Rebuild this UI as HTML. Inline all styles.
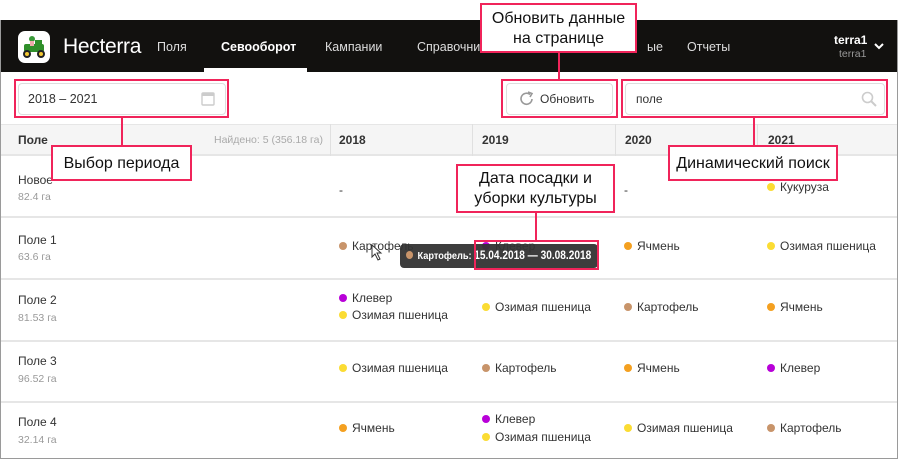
<!DOCTYPE html>
<html><head><meta charset="utf-8"><style>
*{margin:0;padding:0;box-sizing:border-box}
body{width:900px;height:460px;background:#fff;position:relative;overflow:hidden;font-family:"Liberation Sans",Arial,sans-serif;color:#333}
.a{position:absolute}
.frame{left:0;top:20px;width:898px;height:439px;border:1px solid #9a9a9a;border-top:none}
.hdr{left:1px;top:20px;width:896px;height:52px;background:#12110f}
.nav{color:#ddd;font-size:12.5px;top:40px}
.t{font-size:12px;color:#333;white-space:nowrap}
.sub{font-size:10.5px;color:#999}
.d{display:inline-block;width:8px;height:8px;border-radius:50%;margin-right:5px;vertical-align:0}
.k{background:#c8946a}.v{background:#b800d8}.o{background:#fbdc33}.y{background:#f4a020}
.line{background:#e6e6e6;height:2px;left:1px;width:896px}
.red{border:2px solid #f0245a}
.cb{background:#fff;font-size:16px;color:#111;text-align:center;line-height:20px}
.rl{background:#f0245a}
</style></head><body>
<div class="a frame"></div>
<div class="a hdr"></div>
<div class="a" style="left:18px;top:31px;width:32px;height:32px;background:#fff;border-radius:7px"></div>
<svg class="a" style="left:20px;top:34px" width="28" height="26" viewBox="0 0 28 26">
<rect x="4" y="10" width="20" height="8" rx="2" fill="#2f8f2a"/><rect x="15" y="6" width="7" height="6" fill="#2f8f2a"/>
<circle cx="12" cy="5" r="3" fill="#3a9a3a"/><rect x="10" y="7" width="4" height="5" fill="#eaa"/>
<circle cx="7" cy="20" r="4" fill="#222"/><circle cx="7" cy="20" r="2" fill="#f3c832"/>
<circle cx="21" cy="20" r="4" fill="#222"/><circle cx="21" cy="20" r="2" fill="#f3c832"/></svg>
<div class="a" style="left:63px;top:35px;color:#fff;font-size:21px;letter-spacing:-0.3px">Hecterra</div>
<div class="a nav" style="left:157px">Поля</div>
<div class="a nav" style="left:221px;color:#fff;font-weight:bold">Севооборот</div>
<div class="a" style="left:204px;top:68px;width:103px;height:4px;background:#fff"></div>
<div class="a nav" style="left:325px">Кампании</div>
<div class="a nav" style="left:417px">Справочники</div>
<div class="a nav" style="left:647px">ые</div>
<div class="a nav" style="left:687px">Отчеты</div>
<div class="a" style="left:834px;top:33px;color:#fff;font-size:12px;font-weight:bold">terra1</div>
<div class="a" style="left:839px;top:48px;color:#999;font-size:10.5px">terra1</div>
<svg class="a" style="left:874px;top:43px" width="10" height="7"><path d="M1 1 L5 5 L9 1" stroke="#fff" stroke-width="2" fill="none"/></svg>

<div class="a" style="left:18px;top:83px;width:208px;height:32px;border:1px solid #ddd;border-radius:4px"></div>
<div class="a t" style="left:28px;top:92px;font-size:12.5px">2018 – 2021</div>
<svg class="a" style="left:201px;top:91px" width="14" height="15"><rect x="1" y="2" width="12" height="12" rx="1" fill="none" stroke="#ccc" stroke-width="1.4"/><rect x="1" y="2" width="12" height="3" fill="#ccc"/></svg>
<div class="a" style="left:506px;top:83px;width:107px;height:32px;border:1px solid #ddd;border-radius:4px"></div>
<svg class="a" style="left:519px;top:91px" width="16" height="16"><path d="M13 8 A5.5 5.5 0 1 1 11 3.5" stroke="#999" stroke-width="1.6" fill="none"/><path d="M9 1 L13 2.5 L11 6" fill="none" stroke="#999" stroke-width="1.6"/></svg>
<div class="a t" style="left:540px;top:92px">Обновить</div>
<div class="a" style="left:625px;top:83px;width:260px;height:32px;border:1px solid #ddd;border-radius:4px"></div>
<div class="a t" style="left:636px;top:92px">поле</div>
<svg class="a" style="left:861px;top:91px" width="16" height="16"><circle cx="6.5" cy="6.5" r="5" stroke="#ccc" stroke-width="1.6" fill="none"/><path d="M10 10 L15 15" stroke="#ccc" stroke-width="2"/></svg>

<div class="a" style="left:1px;top:124px;width:896px;height:32px;background:#f5f5f5;border-top:1px solid #e6e6e6;border-bottom:2px solid #e6e6e6"></div>
<div class="a" style="left:330px;top:124px;width:1px;height:32px;background:#e0e0e0"></div>
<div class="a" style="left:472px;top:124px;width:1px;height:32px;background:#e0e0e0"></div>
<div class="a" style="left:615px;top:124px;width:1px;height:32px;background:#e0e0e0"></div>
<div class="a" style="left:757px;top:124px;width:1px;height:32px;background:#e0e0e0"></div>
<div class="a t" style="left:18px;top:133px;font-weight:bold">Поле</div>
<div class="a" style="left:214px;top:134px;font-size:10.5px;color:#aaa">Найдено: 5 (356.18 га)</div>
<div class="a t" style="left:339px;top:133px;font-weight:bold">2018</div>
<div class="a t" style="left:482px;top:133px;font-weight:bold">2019</div>
<div class="a t" style="left:625px;top:133px;font-weight:bold">2020</div>
<div class="a t" style="left:768px;top:133px;font-weight:bold">2021</div>

<div class="a line" style="top:216px"></div>
<div class="a line" style="top:278px"></div>
<div class="a line" style="top:340px"></div>
<div class="a line" style="top:401px"></div>

<div class="a t" style="left:18px;top:173px">Новое</div><div class="a sub" style="left:18px;top:191px">82.4 га</div>
<div class="a t" style="left:339px;top:183px">-</div><div class="a t" style="left:624px;top:183px">-</div>
<div class="a t" style="left:767px;top:180px"><span class="d o"></span>Кукуруза</div>

<div class="a t" style="left:18px;top:233px">Поле 1</div><div class="a sub" style="left:18px;top:251px">63.6 га</div>
<div class="a t" style="left:339px;top:239px"><span class="d k"></span>Картофель</div>
<div class="a t" style="left:482px;top:239px"><span class="d v"></span>Клевер</div>
<div class="a t" style="left:624px;top:239px"><span class="d y"></span>Ячмень</div>
<div class="a t" style="left:767px;top:239px"><span class="d o"></span>Озимая пшеница</div>

<div class="a t" style="left:18px;top:293px">Поле 2</div><div class="a sub" style="left:18px;top:312px">81.53 га</div>
<div class="a t" style="left:339px;top:291px"><span class="d v"></span>Клевер</div>
<div class="a t" style="left:339px;top:308px"><span class="d o"></span>Озимая пшеница</div>
<div class="a t" style="left:482px;top:300px"><span class="d o"></span>Озимая пшеница</div>
<div class="a t" style="left:624px;top:300px"><span class="d k"></span>Картофель</div>
<div class="a t" style="left:767px;top:300px"><span class="d y"></span>Ячмень</div>

<div class="a t" style="left:18px;top:354px">Поле 3</div><div class="a sub" style="left:18px;top:373px">96.52 га</div>
<div class="a t" style="left:339px;top:361px"><span class="d o"></span>Озимая пшеница</div>
<div class="a t" style="left:482px;top:361px"><span class="d k"></span>Картофель</div>
<div class="a t" style="left:624px;top:361px"><span class="d y"></span>Ячмень</div>
<div class="a t" style="left:767px;top:361px"><span class="d v"></span>Клевер</div>

<div class="a t" style="left:18px;top:415px">Поле 4</div><div class="a sub" style="left:18px;top:434px">32.14 га</div>
<div class="a t" style="left:339px;top:421px"><span class="d y"></span>Ячмень</div>
<div class="a t" style="left:482px;top:412px"><span class="d v"></span>Клевер</div>
<div class="a t" style="left:482px;top:430px"><span class="d o"></span>Озимая пшеница</div>
<div class="a t" style="left:624px;top:421px"><span class="d o"></span>Озимая пшеница</div>
<div class="a t" style="left:767px;top:421px"><span class="d k"></span>Картофель</div>

<!-- tooltip -->
<div class="a" style="left:400px;top:244px;width:198px;height:24px;background:#333;border-radius:4px;opacity:.95"></div>
<div class="a" style="left:406px;top:250px;font-size:10.5px;color:#fff;font-weight:bold;white-space:nowrap;transform:scaleX(0.88);transform-origin:left top"><span class="d k"></span>Картофель: <span style="font-size:11.5px">15.04.2018 — 30.08.2018</span></div>
<svg class="a" style="left:371px;top:244px" width="12" height="17"><path d="M1 1 L1 13 L4 10 L7 16 L9 15 L6 9 L10 9 Z" fill="#fff" stroke="#333" stroke-width="1"/></svg>

<!-- callouts -->
<div class="a red" style="left:14px;top:79px;width:215px;height:39px"></div>
<div class="a rl" style="left:121px;top:118px;width:2px;height:28px"></div>
<div class="a red cb" style="left:51px;top:145px;width:141px;height:36px;padding-top:7px">Выбор периода</div>

<div class="a red" style="left:501px;top:79px;width:117px;height:39px"></div>
<div class="a rl" style="left:558px;top:52px;width:2px;height:28px"></div>
<div class="a red cb" style="left:480px;top:3px;width:157px;height:50px;padding-top:4px">Обновить данные<br>на странице</div>

<div class="a red" style="left:621px;top:79px;width:267px;height:39px"></div>
<div class="a rl" style="left:753px;top:118px;width:2px;height:28px"></div>
<div class="a red cb" style="left:668px;top:145px;width:170px;height:36px;padding-top:7px">Динамический поиск</div>

<div class="a red cb" style="left:456px;top:164px;width:159px;height:49px;padding-top:3px">Дата посадки и<br>уборки культуры</div>
<div class="a rl" style="left:535px;top:213px;width:2px;height:28px"></div>
<div class="a red" style="left:474px;top:240px;width:125px;height:30px"></div>
</body></html>
